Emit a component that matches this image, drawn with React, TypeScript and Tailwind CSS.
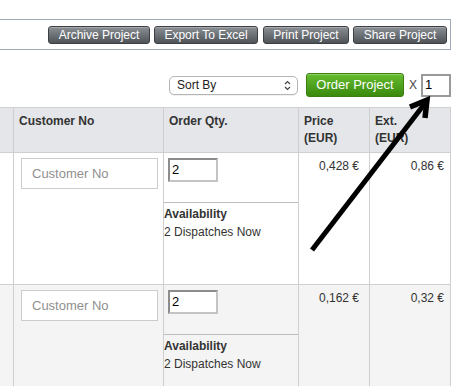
import React from "react";

function TopButton({ label, w }: { label: string; w: string }) {
  return (
    <div
      className={`${w} h-[18px] rounded-[3px] border border-[#3c4044] bg-gradient-to-b from-[#8b9095] to-[#4f5459] text-white text-[12px] leading-[16px] flex items-center justify-center shadow-[inset_0_1px_0_rgba(255,255,255,0.25)]`}
    >
      {label}
    </div>
  );
}

function Row({ bg, price, ext }: { bg: string; price: string; ext: string }) {
  return (
    <div className={`flex h-[132px] border-b border-[#cfcfcf] ${bg}`}>
      <div className="w-[14px] border-r border-[#cfcfcf]" />
      <div className="w-[150px] border-r border-[#cfcfcf] pl-[7px] pt-[5px]">
        <div className="w-[137px] h-[31px] border border-[#cccccc] bg-white flex items-center pl-[10px] text-[13px] text-[#8f8f8f]">
          Customer No
        </div>
      </div>
      <div className="w-[135px] border-r border-[#cfcfcf] flex flex-col">
        <div className="h-[50px] border-b border-[#bdbdbd] pl-[4px] pt-[5px]">
          <div className="w-[50px] h-[24px] bg-white border-2 border-t-[#8c8c8c] border-l-[#8c8c8c] border-r-[#c4c4c4] border-b-[#c4c4c4] flex items-center pl-[2px] text-[13px] text-black">
            2
          </div>
        </div>
        <div className="pt-[2px] text-[12px] leading-[18px] text-[#333]">
          <div className="font-bold">Availability</div>
          <div>2 Dispatches Now</div>
        </div>
      </div>
      <div className="w-[71px] border-r border-[#cfcfcf] text-right pr-[10px] pt-[5px] text-[12px] leading-[16px] text-[#333]">
        {price}
      </div>
      <div className="w-[81px] border-r border-[#cfcfcf] text-right pr-[6px] pt-[5px] text-[12px] leading-[16px] text-[#333]">
        {ext}
      </div>
    </div>
  );
}

export default function App() {
  return (
    <div className="relative w-[476px] h-[386px] overflow-hidden bg-white font-['Liberation_Sans',Arial,sans-serif]">
      <div className="mt-[19px] h-[31px] w-[451px] border-t border-b border-r border-[#a1acb9] flex items-center justify-end pr-[3px]">
        <TopButton label="Archive Project" w="w-[102px]" />
        <div className="w-[4px]" />
        <TopButton label="Export To Excel" w="w-[104px]" />
        <div className="w-[5px]" />
        <TopButton label="Print Project" w="w-[86px]" />
        <div className="w-[4px]" />
        <TopButton label="Share Project" w="w-[94px]" />
      </div>

      <div className="mt-[23px] h-[24px] w-[451px] flex items-center justify-end">
        <div className="w-[129px] h-[19px] rounded-[5px] border border-[#b5b5b5] bg-white flex items-center justify-between pl-[7px] pr-[6px] text-[12px] text-[#222] shadow-[0_1px_0_rgba(0,0,0,0.05)]">
          <span>Sort By</span>
          <svg width="7" height="11" viewBox="0 0 7 11" fill="none" stroke="#444" strokeWidth="1.2">
            <path d="M1 4 L3.5 1.5 L6 4" />
            <path d="M1 7 L3.5 9.5 L6 7" />
          </svg>
        </div>
        <div className="ml-[8px] w-[98px] h-[24px] rounded-[3px] border border-[#3b7f12] bg-gradient-to-b from-[#66bd2f] to-[#3a8a0c] text-white text-[13px] flex items-center justify-center shadow-[inset_0_1px_0_rgba(255,255,255,0.3)]">
          Order Project
        </div>
        <span className="ml-[5px] text-[12px] text-[#444]">X</span>
        <div className="ml-[4px] w-[30px] h-[23px] bg-white border-2 border-[#9a9a9a] flex items-center pl-[2px] text-[13px] text-black">
          1
        </div>
      </div>

      <div className="mt-[10px] w-[451px]">
        <div className="flex h-[46px] border-t border-b border-[#cfcfcf] bg-[#e4e6ea] text-[12px] leading-[17px] font-bold text-[#333]">
          <div className="w-[14px] border-r border-[#cfcfcf]" />
          <div className="w-[150px] border-r border-[#cfcfcf] pl-[5px] pt-[5px]">Customer No</div>
          <div className="w-[135px] border-r border-[#cfcfcf] pl-[5px] pt-[5px]">Order Qty.</div>
          <div className="w-[71px] border-r border-[#cfcfcf] pl-[5px] pt-[5px]">
            <div>Price</div>
            <div>(EUR)</div>
          </div>
          <div className="w-[81px] border-r border-[#cfcfcf] pl-[5px] pt-[5px]">
            <div>Ext.</div>
            <div>(EUR)</div>
          </div>
        </div>
        <Row bg="bg-white" price="0,428 €" ext="0,86 €" />
        <Row bg="bg-[#f4f4f4]" price="0,162 €" ext="0,32 €" />
      </div>

      <svg className="absolute left-0 top-0 pointer-events-none" width="476" height="386" viewBox="0 0 476 386">
        <line x1="312" y1="250" x2="426" y2="102" stroke="#000" strokeWidth="5" />
        <polyline points="410,107 427,100 425,118" fill="none" stroke="#000" strokeWidth="5.5" strokeLinejoin="miter" />
      </svg>
    </div>
  );
}
